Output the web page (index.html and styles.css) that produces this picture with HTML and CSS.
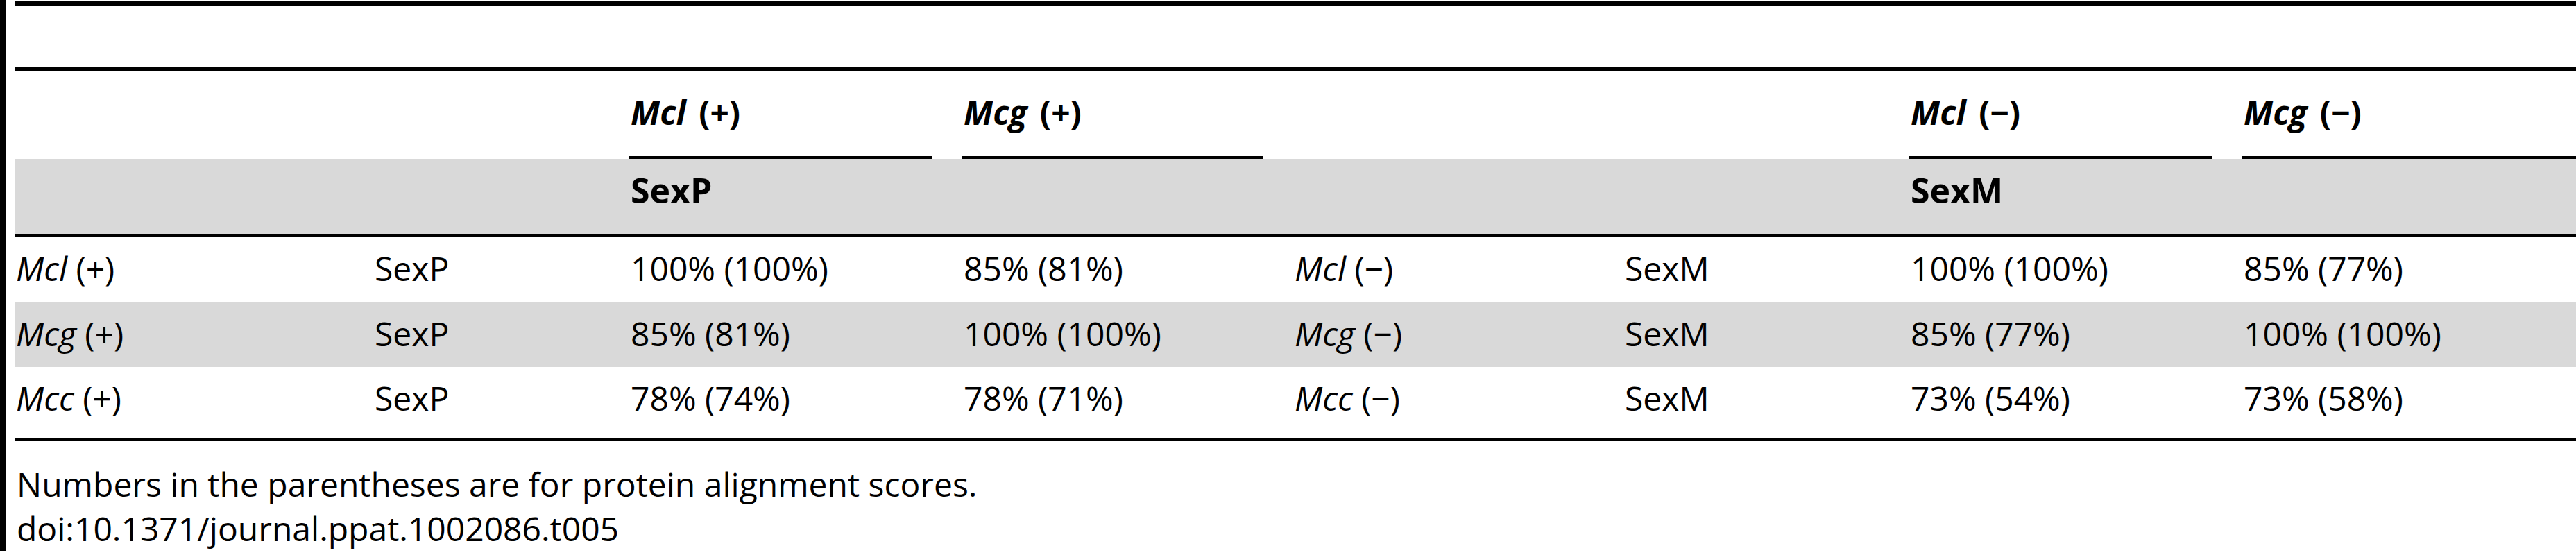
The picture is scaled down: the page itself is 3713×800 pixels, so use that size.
FILE: index.html
```html
<!DOCTYPE html>
<html>
<head>
<meta charset="utf-8">
<link rel="stylesheet" href="styles.css">
</head>
<body>
<div class="page">
  <div class="tbl">
    <div class="rule rule-top"></div>
    <div class="caption-space"></div>
    <div class="rule rule-mid"></div>

    <div class="row head-a">
      <div class="cell"></div>
      <div class="cell"></div>
      <div class="cell"><div class="hlabel"><i>Mcl</i> (+)</div></div>
      <div class="cell"><div class="hlabel"><i>Mcg</i> (+)</div></div>
      <div class="cell"></div>
      <div class="cell"></div>
      <div class="cell"><div class="hlabel"><i>Mcl</i> (&minus;)</div></div>
      <div class="cell"><div class="hlabel hlabel-end"><i>Mcg</i> (&minus;)</div></div>
    </div>

    <div class="row head-b">
      <div class="cell"></div>
      <div class="cell"></div>
      <div class="cell">SexP</div>
      <div class="cell"></div>
      <div class="cell"></div>
      <div class="cell"></div>
      <div class="cell">SexM</div>
      <div class="cell"></div>
    </div>

    <div class="rule rule-thin"></div>

    <div class="row data">
      <div class="cell"><i>Mcl</i> (+)</div>
      <div class="cell">SexP</div>
      <div class="cell">100% (100%)</div>
      <div class="cell">85% (81%)</div>
      <div class="cell"><i>Mcl</i> (&minus;)</div>
      <div class="cell">SexM</div>
      <div class="cell">100% (100%)</div>
      <div class="cell">85% (77%)</div>
    </div>
    <div class="row data alt">
      <div class="cell"><i>Mcg</i> (+)</div>
      <div class="cell">SexP</div>
      <div class="cell">85% (81%)</div>
      <div class="cell">100% (100%)</div>
      <div class="cell"><i>Mcg</i> (&minus;)</div>
      <div class="cell">SexM</div>
      <div class="cell">85% (77%)</div>
      <div class="cell">100% (100%)</div>
    </div>
    <div class="row data last">
      <div class="cell"><i>Mcc</i> (+)</div>
      <div class="cell">SexP</div>
      <div class="cell">78% (74%)</div>
      <div class="cell">78% (71%)</div>
      <div class="cell"><i>Mcc</i> (&minus;)</div>
      <div class="cell">SexM</div>
      <div class="cell">73% (54%)</div>
      <div class="cell">73% (58%)</div>
    </div>

    <div class="rule rule-thin"></div>
  </div>

  <div class="foot">
    <div class="foot-line">Numbers in the parentheses are for protein alignment scores.</div>
    <div class="foot-line">doi:10.1371/journal.ppat.1002086.t005</div>
  </div>
</div>
</body>
</html>
```

FILE: styles.css
```css
html, body {
  margin: 0;
  padding: 0;
  background: #ffffff;
  overflow: hidden;
}

body {
  font-family: "Open Sans", "Noto Sans", sans-serif;
  color: #000000;
}

.page {
  border-left: 8px solid #000000;
  padding: 1px 0 0 13px;
  width: 3780px;
}

.tbl {
  width: 3771px;
}

.rule {
  background: #000000;
}

.rule-top {
  height: 8px;
}

.caption-space {
  height: 88px;
}

.rule-mid {
  height: 5px;
}

.rule-thin {
  height: 4px;
}

.row {
  display: grid;
  grid-template-columns: 517px 369px 480px 477px 476px 412px 480px 560px;
}

.cell {
  padding-left: 2px;
  white-space: nowrap;
}

.head-a .cell {
  padding-left: 0;
}

.hlabel {
  font-size: 48px;
  font-weight: 700;
  line-height: 65px;
  word-spacing: 6px;
  padding: 27px 0 31px 2px;
  border-bottom: 4px solid #000000;
  margin-right: 44px;
}

.hlabel-end {
  margin-right: 0;
}

.head-b {
  background: #d9d9d9;
  font-size: 50px;
  font-weight: 700;
  line-height: 68px;
  padding: 11px 0 30px 0;
}

.data {
  font-size: 48px;
  line-height: 65px;
  padding: 12px 0 17px 0;
}

.data.alt {
  background: #d9d9d9;
  padding-bottom: 16px;
}

.data.last {
  padding-bottom: 26px;
}

.foot {
  margin-top: 30px;
  padding-left: 3px;
  font-size: 48px;
  line-height: 64px;
}

.foot-line {
  white-space: nowrap;
}
```
